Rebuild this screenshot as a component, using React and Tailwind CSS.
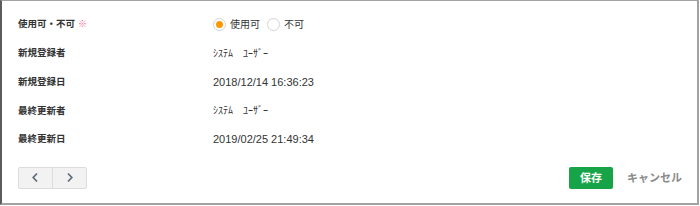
import { useState } from "react";

const rows = [
  { label: "新規登録者", value: "ｼｽﾃﾑ　ﾕｰｻﾞｰ", kana: true },
  { label: "新規登録日", value: "2018/12/14 16:36:23" },
  { label: "最終更新者", value: "ｼｽﾃﾑ　ﾕｰｻﾞｰ", kana: true },
  { label: "最終更新日", value: "2019/02/25 21:49:34" },
];

function Radio({ checked, label, onClick }) {
  return (
    <button type="button" onClick={onClick} className="flex items-center gap-[4px]">
      <span className="w-[13px] h-[13px] rounded-full border border-[#d4d4d4] bg-white flex items-center justify-center">
        {checked && <span className="w-[7px] h-[7px] rounded-full bg-[#ff9900]" />}
      </span>
      <span className="text-[10px] text-[#333]">{label}</span>
    </button>
  );
}

export default function App() {
  const [usable, setUsable] = useState(true);

  return (
    <div
      className="w-[699px] h-[205px] bg-white border-l-2 border-l-[#5c5c5c] border-t border-t-[#a3a3a3] border-r-2 border-r-[#a3a3a3] border-b-2 border-b-[#a3a3a3] flex flex-col"
      style={{ fontFamily: '"Liberation Sans", Arial, "Noto Sans CJK JP", sans-serif' }}
    >
      <div className="pt-[9px] pl-[16px]">
        <div className="flex items-center h-[28.75px]">
          <div className="w-[195px] text-[9.5px] font-bold text-[#333] flex items-center">
            使用可・不可
            <span className="ml-[3px] text-[#f7668a] text-[9px] font-normal">※</span>
          </div>
          <div className="flex items-center gap-[7px]">
            <Radio checked={usable} label="使用可" onClick={() => setUsable(true)} />
            <Radio checked={!usable} label="不可" onClick={() => setUsable(false)} />
          </div>
        </div>
        {rows.map((r) => (
          <div key={r.label} className="flex items-center h-[28.75px]">
            <div className="w-[195px] text-[9.5px] font-bold text-[#333]">{r.label}</div>
            <div className={r.kana ? "text-[10px] text-[#333]" : "text-[11px] text-[#333]"}>{r.value}</div>
          </div>
        ))}
      </div>

      <div className="flex items-center justify-between mt-[13px] pl-[16px] pr-[15px]">
        <div className="flex h-[22px] border border-[#dcdcdc] rounded-[2px] bg-[#f2f2f2]">
          <button type="button" className="w-[34px] flex items-center justify-center border-r border-[#dcdcdc]">
            <svg width="9" height="11" viewBox="0 0 9 11" fill="none" stroke="#5e6b78" strokeWidth="1.7">
              <path d="M6 1.5 L2.2 5.5 L6 9.5" />
            </svg>
          </button>
          <button type="button" className="w-[33px] flex items-center justify-center">
            <svg width="9" height="11" viewBox="0 0 9 11" fill="none" stroke="#5e6b78" strokeWidth="1.7">
              <path d="M3 1.5 L6.8 5.5 L3 9.5" />
            </svg>
          </button>
        </div>
        <div className="flex items-center gap-[14px]">
          <button type="button" className="w-[44px] h-[22px] bg-[#17a347] rounded-[2px] text-white text-[11px] font-bold">
            保存
          </button>
          <button type="button" className="text-[11px] font-bold text-[#8a8a8a]">
            キャンセル
          </button>
        </div>
      </div>
    </div>
  );
}
